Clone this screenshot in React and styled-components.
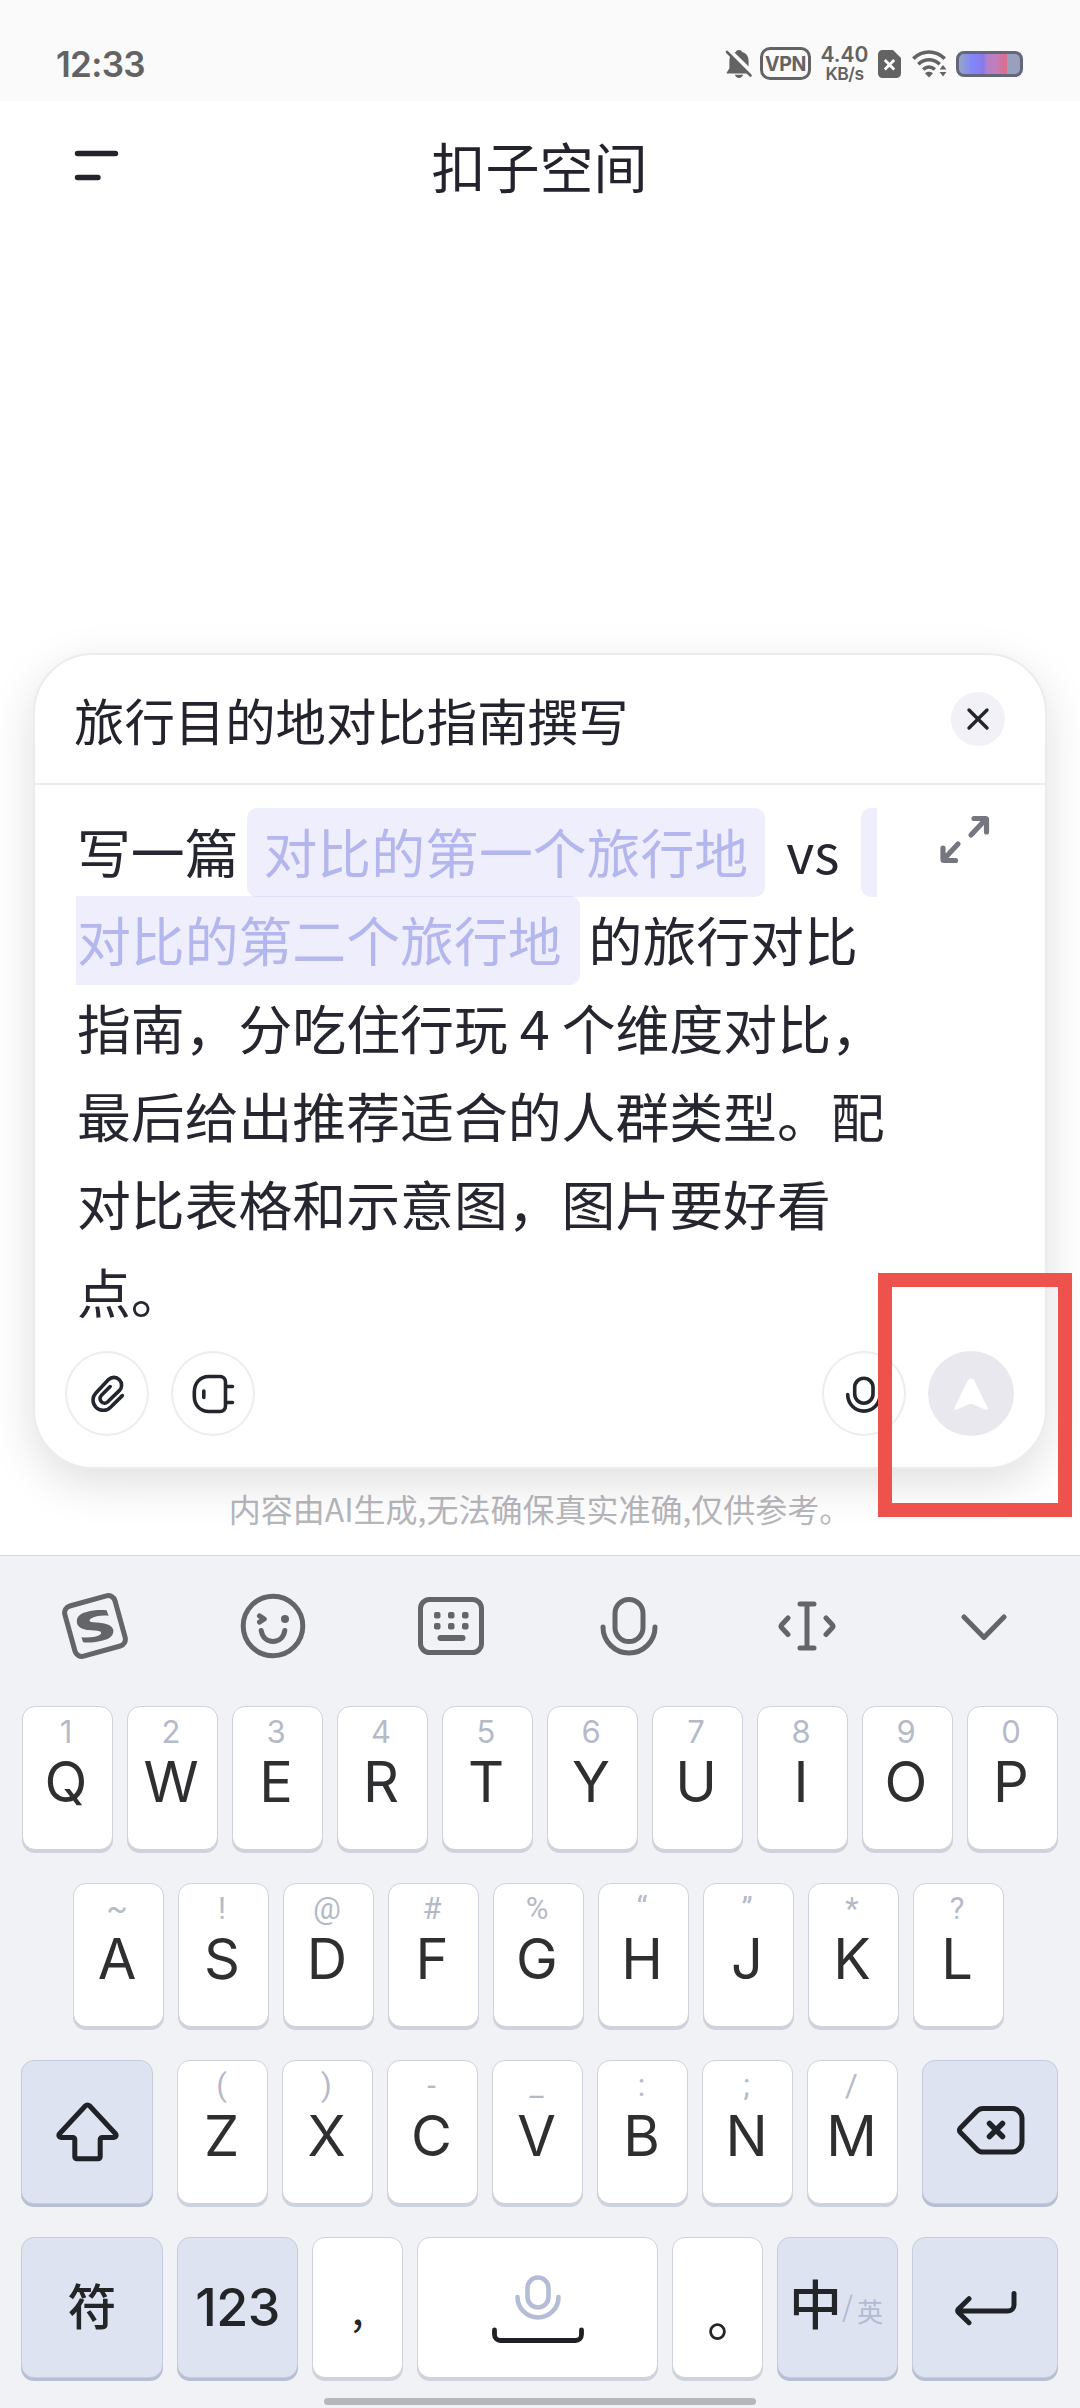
import React from 'react';
import styled, { createGlobalStyle } from 'styled-components';

const cjk = `'Noto Sans CJK SC', sans-serif`;
const latin = `Inter, 'Noto Sans CJK SC', sans-serif`;

const topRow = [['Q', '1'], ['W', '2'], ['E', '3'], ['R', '4'], ['T', '5'], ['Y', '6'], ['U', '7'], ['I', '8'], ['O', '9'], ['P', '0']];
const homeRow = [['A', '~'], ['S', '!'], ['D', '@'], ['F', '#'], ['G', '%'], ['H', '“'], ['J', '”'], ['K', '*'], ['L', '?']];
const bottomRow = [['Z', '('], ['X', ')'], ['C', '-'], ['V', '_'], ['B', ':'], ['N', ';'], ['M', '/']];

const Icon = ({ w, h, color = '#24262e', stroke = 3.6, children }) => (
    <svg width={w} height={h} viewBox={`0 0 ${w} ${h}`} fill="none" stroke={color} strokeWidth={stroke} strokeLinecap="round" strokeLinejoin="round">
        {children}
    </svg>
);

const StatusIcons = () => (
    <Indicators>
        <Icon w={28} h={30} color="none">
            <path fill="#636363" d="M14 1c2 0 2.8 1 3 1.9 4.400 1 6.600 4.400 6.600 9v7.400l2.600 4.200v.9H1.800v-.9l2.600-4.200v-7.400c0-4.600 2.200-8 6.600-9C11.200 2 12 1 14 1zM9.800 25.800h8.400c-.6 2-2.200 3.200-4.200 3.200s-3.600-1.200-4.200-3.200z" />
            <path stroke="#fafafa" strokeWidth="5.500" d="M3.500 1.500L27 24.500" />
            <path stroke="#636363" strokeWidth="2.600" d="M2 3L25.500 26.500" />
        </Icon>
        <Vpn>VPN</Vpn>
        <Speed><b>4.40</b><span>KB/s</span></Speed>
        <Icon w={23} h={28} color="none">
            <path fill="#636363" d="M4.500 0H15l8 8v15.500a4.500 4.500 0 0 1-4.500 4.500h-14A4.500 4.500 0 0 1 0 23.500v-19A4.500 4.500 0 0 1 4.500 0z" />
            <path stroke="#fff" strokeWidth="2.800" strokeLinecap="butt" d="M6.800 10l9.400 9.400M16.200 10l-9.400 9.400" />
        </Icon>
        <Wifi>
            <Icon w={35} h={28} color="#636363" stroke={3.6}>
                <path strokeLinecap="butt" d="M1.300 8.600C10.500-.2 23.500-.2 32.700 8.600" />
                <path strokeLinecap="butt" d="M6.300 14.200C12.700 8.200 21.300 8.200 27.700 14.200" />
                <path strokeLinecap="butt" d="M11.200 19.500C14.600 16.300 19.400 16.300 22.800 19.500" />
                <path stroke="none" fill="#636363" d="M17 27.500l-4-4.300c2-2 6-2 8 0zM31 15l3.400 4.600h-6.800zM31 26.500l-3.400-4.600h6.800z" />
            </Icon>
        </Wifi>
        <Battery />
    </Indicators>
);

const MicIcon = ({ color, stroke = 5 }) => (
    <Icon w={58} h={60} color={color} stroke={stroke}>
        <rect x="15" y="3.500" width="28" height="42" rx="14" />
        <path d="M3 31a26 26 0 0 0 52 0" />
    </Icon>
);

const Key = ({ letter, hint }) => (
    <KeyCap>
        <Hint $symbol={!/\d/.test(hint)}>{hint}</Hint>
        <Letter>{letter}</Letter>
    </KeyCap>
);

const Keyboard = () => (
    <Board>
        <Tools>
            <Tool>
                <Icon w={66} h={66} color="#636569" stroke={5}>
                    <rect x="7" y="7" width="52" height="52" rx="7" transform="rotate(-15.500 33 33)" />
                    <path stroke="none" fill="#636569" d="M44.600 17.300L46.600 22.700C40 21.800 33 23 29 25.500c-2 1.400-2 3 .5 3.400C36 30 50 29 51.400 37.300 52 44 45 47 38.400 48 32 49.300 26 50 21.100 49.300L19.400 44.300C26 44.800 33 44.500 37.500 42c2.500-1.600 2-3.600-1-4C30 37 16.500 38 15 30 14 23 19 20.500 24.600 19 31 17 38 16.600 44.600 17.300z" />
                </Icon>
            </Tool>
            <Tool>
                <Icon w={66} h={66} color="#636569" stroke={5}>
                    <circle cx="33" cy="33" r="29.800" />
                    <path d="M21.200 37.500c1.200 7.200 6 11 11.800 11s10.600-3.800 11.800-11" />
                    <path d="M19.500 22.800l4.800 3.200-4.800 3.200" />
                    <circle cx="45" cy="26" r="4" stroke="none" fill="#636569" />
                </Icon>
            </Tool>
            <Tool>
                <Icon w={66} h={58} color="#636569" stroke={5}>
                    <rect x="2.500" y="2.500" width="61" height="53" rx="9" />
                    <path strokeWidth="6" d="M22.500 41h22" />
                    <g stroke="none" fill="#636569">
                        <rect x="16" y="15" width="6.500" height="6.500" rx="2" />
                        <rect x="30" y="15" width="6.500" height="6.500" rx="2" />
                        <rect x="44" y="15" width="6.500" height="6.500" rx="2" />
                        <rect x="16" y="26" width="6.500" height="6.500" rx="2" />
                        <rect x="30" y="26" width="6.500" height="6.500" rx="2" />
                        <rect x="44" y="26" width="6.500" height="6.500" rx="2" />
                    </g>
                </Icon>
            </Tool>
            <Tool><MicIcon color="#636569" /></Tool>
            <Tool>
                <Icon w={58} h={52} color="#636569" stroke={5}>
                    <path d="M29 4v44M22 4h14M22 48h14M10 18l-6.500 7a2 2 0 0 0 0 2.500l6.500 7M48 18l6.500 7a2 2 0 0 1 0 2.500l-6.500 7" />
                </Icon>
            </Tool>
            <Tool>
                <Icon w={48} h={28} color="#636569" stroke={5}>
                    <path d="M3 5L23 25.500 43 5" />
                </Icon>
            </Tool>
        </Tools>
        <Keys>
            <Row>{topRow.map(([letter, hint]) => <Key key={letter} letter={letter} hint={hint} />)}</Row>
            <Row $nudge>{homeRow.map(([letter, hint]) => <Key key={letter} letter={letter} hint={hint} />)}</Row>
            <Row $spread>
                <ActionKey $width={132}>
                    <Icon w={63} h={60} color="#1f2226" stroke={5}>
                        <path d="M29.500 3.800a2.800 2.800 0 0 1 4 0L59.500 31.800a2.200 2.200 0 0 1-1.600 3.700H46.200a2 2 0 0 0-2 2V54.700a2 2 0 0 1-2 2H20.800a2 2 0 0 1-2-2V37.500a2 2 0 0 0-2-2H5.100a2.200 2.200 0 0 1-1.600-3.700z" />
                    </Icon>
                </ActionKey>
                <Letters>{bottomRow.map(([letter, hint]) => <Key key={letter} letter={letter} hint={hint} />)}</Letters>
                <ActionKey $width={136}>
                    <Icon w={69} h={54} color="#1f2226" stroke={5}>
                        <path d="M27 3.500H56a10 10 0 0 1 10 10V37a10 10 0 0 1-10 10H27q-3.500 0-6-2.600L4.200 27.200a2.800 2.800 0 0 1 0-3.900L21 6.100q2.500-2.600 6-2.600z" />
                        <path strokeWidth="5.500" d="M33.500 18.500l13 13M46.500 18.500l-13 13" />
                    </Icon>
                </ActionKey>
            </Row>
            <Row $short>
                <ActionKey $width={142}><Symbol>符</Symbol></ActionKey>
                <ActionKey $width={121}><Digits>123</Digits></ActionKey>
                <PlainKey $width={91}><Comma>,</Comma></PlainKey>
                <PlainKey $width={241}>
                    <SpaceMark>
                        <Icon w={46} h={46} color="#b5bdd6" stroke={4.6}>
                            <rect x="12.500" y="2.500" width="21" height="30" rx="10.500" />
                            <path d="M2.500 22a20.500 20.500 0 0 0 41 0" />
                        </Icon>
                        <Icon w={92} h={16} color="#202124" stroke={4.8}>
                            <path d="M2.500 3v4.500a6 6 0 0 0 6 6h75a6 6 0 0 0 6-6V3" />
                        </Icon>
                    </SpaceMark>
                </PlainKey>
                <PlainKey $width={91}><FullStop>。</FullStop></PlainKey>
                <ActionKey $width={121}>
                    <LangSwitch>中<i>/</i><small>英</small></LangSwitch>
                </ActionKey>
                <ActionKey $width={146}>
                    <Icon w={63} h={36} color="#1f2226" stroke={5}>
                        <path d="M60 3.500V15a6 6 0 0 1-6 6H4M15 8.700L4.200 19.400a2 2 0 0 0 0 2.800L15 32.700" />
                    </Icon>
                </ActionKey>
            </Row>
        </Keys>
        <HomeBar />
    </Board>
);

const App = () => (
    <Screen>
        <GlobalStyle />
        <StatusBar>
            <Clock>12:33</Clock>
            <StatusIcons />
        </StatusBar>
        <Header>
            <Icon w={46} h={32} color="#22232c" stroke={5.4}>
                <path d="M3.500 3.500h38M3.500 27.500h20.500" />
            </Icon>
            <PageTitle>扣子空间</PageTitle>
        </Header>
        <Card>
            <CardHeader>
                <CardTitle>旅行目的地对比指南撰写</CardTitle>
                <Close>
                    <Icon w={24} h={24} stroke={3.4}>
                        <path d="M3 3l18 18M21 3L3 21" />
                    </Icon>
                </Close>
            </CardHeader>
            <Prompt>
                <Line>写一篇<Chip>对比的第一个旅行地</Chip>{' vs '}<ChipStart /></Line>
                <Line><Chip $continued>对比的第二个旅行地</Chip>的旅行对比</Line>
                <Line>指南，分吃住行玩 4 个维度对比，</Line>
                <Line>最后给出推荐适合的人群类型。配</Line>
                <Line>对比表格和示意图，图片要好看</Line>
                <Line>点。</Line>
                <Expand>
                    <Icon w={52} h={52} color="#757680" stroke={5.2}>
                        <path d="M33 22L48 6M36 5.500h11.500a1 1 0 0 1 1 1V19M20 31L6 46M5 35v11.500a1 1 0 0 0 1 1h11.500" />
                    </Icon>
                </Expand>
            </Prompt>
            <Actions>
                <Round>
                    <Icon w={84} h={84}>
                        <path d="M57.300 43.600L45.600 55.200A10.200 10.200 0 0 1 30.900 41L43.500 27.600A7.700 7.700 0 0 1 54.300 38.600L42.500 50A4.500 4.500 0 0 1 36.200 43.600L45.200 34.600" />
                    </Icon>
                </Round>
                <Round>
                    <Icon w={84} h={84}>
                        <path d="M38 24.500h11a5.500 5.500 0 0 1 5.500 5.500v24a5.500 5.500 0 0 1-5.500 5.500H38c-9 0-14.700-6.500-14.700-15.500v-4c0-9 5.700-15.500 14.700-15.500zM32.800 39v6.500M55 34.500h6.500M55 50.500h6.500" />
                    </Icon>
                </Round>
                <Spacer />
                <Round>
                    <Icon w={84} h={84}>
                        <rect x="32.700" y="26.200" width="18.300" height="25" rx="9.150" />
                        <path d="M25.700 42.500a16.200 16.600 0 0 0 32.400 0" />
                    </Icon>
                </Round>
                <Send>
                    <Icon w={36} h={34} color="none">
                        <path fill="#fff" d="M14.500 4c1.500-3.500 5.500-3.500 7 0l13 26.500c.8 1.800-.6 2.800-2.500 2.100L18 26.500 4 32.600c-1.900.7-3.300-.3-2.500-2.100z" />
                    </Icon>
                </Send>
            </Actions>
            <Marker />
        </Card>
        <Disclaimer>内容由AI生成,无法确保真实准确,仅供参考。</Disclaimer>
        <Keyboard />
    </Screen>
);

const GlobalStyle = createGlobalStyle`
    * {
        box-sizing: border-box;
    }
    body {
        margin: 0;
        background: #fff;
    }
    svg {
        display: block;
        flex: none;
    }
`;

const Screen = styled.div`
    display: flex;
    flex-direction: column;
    width: 1080px;
    height: 2408px;
    overflow: hidden;
    background: #fff;
    color: #25262f;
    font-family: ${cjk};
`;

const StatusBar = styled.div`
    display: flex;
    align-items: center;
    justify-content: space-between;
    flex: none;
    height: 101px;
    padding: 26px 57px 0 56px;
    background: #fafafa;
    color: #636363;
    font-family: ${latin};
`;

const Clock = styled.span`
    font-size: 35px;
    font-weight: 600;
    letter-spacing: -.7px;
`;

const Indicators = styled.div`
    display: flex;
    align-items: center;
`;

const Vpn = styled.span`
    display: flex;
    align-items: center;
    justify-content: center;
    width: 51px;
    height: 33px;
    margin: 0 11px 0 7px;
    border: 3px solid #636363;
    border-radius: 10px;
    font-size: 19.500px;
    font-weight: 700;
    letter-spacing: -.4px;
`;

const Speed = styled.span`
    display: flex;
    flex-direction: column;
    align-items: center;
    width: 45px;
    margin-right: 11px;
    line-height: 19px;
    b {
        font-size: 21px;
        font-weight: 600;
    }
    span {
        font-size: 17.500px;
        font-weight: 600;
        letter-spacing: -.5px;
    }
`;

const Wifi = styled.span`
    margin-left: 11px;
`;

const Battery = styled.span`
    width: 67px;
    height: 26px;
    margin-left: 9px;
    border: 3px solid #64667a;
    border-radius: 8px;
    background: linear-gradient(90deg, #98a4ca 0, #8f9cd6 8%, #8288f8 20%, #8a78ea 40%, #b082c8 46%, #c47cb8 62%, #dc6e90 75%, #d86d92 78%, #98a0be 79%);
`;

const Header = styled.div`
    display: flex;
    align-items: center;
    flex: none;
    height: 552px;
    padding: 0 72px 422px 74px;
`;

const PageTitle = styled.h1`
    flex: 1;
    margin: 0 49px 0 0;
    font-size: 54px;
    font-weight: 400;
    line-height: 80px;
    text-align: center;
    color: #22232c;
`;

const Card = styled.section`
    position: relative;
    display: flex;
    flex-direction: column;
    flex: none;
    height: 816px;
    margin: 0 33px;
    border: 2px solid #ececee;
    border-radius: 60px;
    background: #fff;
    box-shadow: 0 14px 46px rgba(0, 0, 0, .13);
`;

const CardHeader = styled.div`
    display: flex;
    align-items: center;
    justify-content: space-between;
    height: 130px;
    padding: 0 40px 0 39px;
    border-bottom: 2px solid #eaeaec;
`;

const CardTitle = styled.h2`
    margin: 0;
    font-size: 50.400px;
    font-weight: 400;
    color: #22232c;
`;

const Close = styled.span`
    display: flex;
    align-items: center;
    justify-content: center;
    width: 54px;
    height: 54px;
    border-radius: 50%;
    background: #f1f1f7;
`;

const Prompt = styled.div`
    position: relative;
    height: 566px;
    padding: 23px 0 0 42px;
    font-size: 53.850px;
`;

const Line = styled.div`
    display: flex;
    align-items: center;
    height: 88px;
    padding-bottom: 2px;
    line-height: 86px;
    white-space: pre;
`;

const Chip = styled.span`
    flex: none;
    height: 89px;
    margin: 2px 9px 0 ${({ $continued }) => ($continued ? '-1px' : '8px')};
    padding: ${({ $continued }) => ($continued ? '0 18px 0 1px' : '0 17px')};
    border-radius: ${({ $continued }) => ($continued ? '0 10px 10px 0' : '10px')};
    background: rgba(104, 104, 230, .11);
    color: #b4b6ee;
`;

const ChipStart = styled.span`
    width: 16px;
    height: 89px;
    margin: 2px 0 0 9px;
    border-radius: 10px 0 0 10px;
    background: rgba(104, 104, 230, .11);
`;

const Expand = styled.span`
    position: absolute;
    top: 28px;
    right: 55px;
`;

const Actions = styled.div`
    display: flex;
    gap: 22px;
    padding: 0 31px 0 30px;
`;

const Round = styled.span`
    display: flex;
    align-items: center;
    justify-content: center;
    width: 84px;
    height: 85px;
    border: 2px solid #ececf1;
    border-radius: 50%;
`;

const Send = styled(Round)`
    width: 86px;
    border: none;
    background: #e9e8ee;
`;

const Spacer = styled.span`
    flex: 1;
`;

// red frame drawn over the send button
const Marker = styled.div`
    position: absolute;
    top: 618px;
    left: 843px;
    width: 194px;
    height: 244px;
    border: 14px solid #ee524c;
`;

const Disclaimer = styled.p`
    flex: none;
    height: 86px;
    margin: 0;
    padding-top: 16px;
    font-size: 32px;
    line-height: 46px;
    text-align: center;
    color: #b6b6bb;
`;

const Board = styled.div`
    display: flex;
    flex-direction: column;
    flex: 1;
    border-top: 1px solid #d9dbdd;
    background: #f0f2f6;
    font-family: ${latin};
`;

const Tools = styled.div`
    display: flex;
    height: 150px;
    padding: 0 6px;
`;

const Tool = styled.span`
    display: flex;
    align-items: center;
    justify-content: center;
    width: 178px;
    height: 139px;
`;

const Keys = styled.div`
    display: flex;
    flex-direction: column;
    gap: 30px;
    padding: 0 22px 0 21px;
`;

const Row = styled.div`
    display: flex;
    justify-content: ${({ $spread, $short }) => ($spread || $short ? 'space-between' : 'center')};
    gap: ${({ $spread, $short }) => ($spread || $short ? 0 : '14px')};
    height: ${({ $short }) => ($short ? 144 : 147)}px;
    padding-right: ${({ $nudge }) => ($nudge ? 3 : 0)}px;
`;

const Letters = styled.div`
    display: flex;
    gap: 14px;
`;

const KeyCap = styled.div`
    display: flex;
    flex-direction: column;
    align-items: center;
    flex: none;
    width: 91px;
    height: calc(100% - 3px);
    padding: 5px 2px 0 0;
    border: 1px solid #ced2db;
    border-radius: 13px;
    background: #fff;
    box-shadow: 0 3px 0 #ccd3de;
`;

const Hint = styled.span`
    height: 40px;
    font-family: ${({ $symbol }) => ($symbol ? 'Roboto, sans-serif' : latin)};
    font-size: 31px;
    line-height: 40px;
    color: #b5bac9;
`;

const Letter = styled.span`
    font-size: 56px;
    line-height: 60px;
    color: #2f2f31;
`;

const PlainKey = styled(KeyCap)`
    align-items: center;
    justify-content: center;
    width: ${({ $width }) => $width}px;
    padding: 0;
    font-family: ${cjk};
    font-size: 54px;
    color: #242528;
`;

const ActionKey = styled(PlainKey)`
    border-color: #c6ccda;
    background: #dde3f0;
    box-shadow: 0 3px 0 #b7bfd3;
`;

const Symbol = styled.span`
    margin-top: -9px;
    font-size: 49px;
    font-weight: 500;
`;

const Digits = styled.span`
    font-family: ${latin};
    font-size: 52px;
    font-weight: 500;
    letter-spacing: -.5px;
`;

const Comma = styled.span`
    margin-top: -4px;
    font-size: 44px;
    line-height: 80px;
`;

const FullStop = styled.span`
    margin: 13px 0 0 33px;
    line-height: 80px;
`;

const SpaceMark = styled.div`
    display: flex;
    flex-direction: column;
    align-items: center;
    gap: 6px;
    margin-top: 3px;
`;

const LangSwitch = styled.span`
    display: flex;
    align-items: center;
    margin: -12px 3px 0 0;
    font-size: 53px;
    font-weight: 500;
    line-height: 70px;
    i, small {
        padding-top: 6px;
        font-size: 26px;
        font-style: normal;
        font-weight: 400;
        color: #b2bad4;
    }
    i {
        font-size: 28px;
    }
    small {
        padding: 19px 0 0 4px;
    }
`;

const HomeBar = styled.div`
    align-self: center;
    width: 432px;
    height: 7px;
    margin-top: 17px;
    border-radius: 4px;
    background: #b5b7bc;
`;

export default App;
